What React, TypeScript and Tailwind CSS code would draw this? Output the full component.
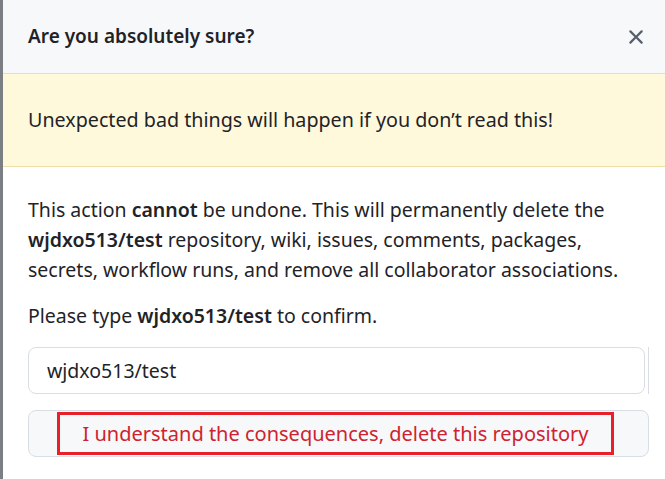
import React from 'react'

export default function App() {
  return (
    <div className="flex h-[479px] w-[665px] overflow-hidden bg-white font-['Noto_Sans',sans-serif] text-[#1f2328]">
      {/* dimmed page behind the dialog */}
      <div className="w-[3px] shrink-0 bg-[#7b7e83]" />

      <div className="flex min-w-0 flex-1 flex-col">
        {/* Header */}
        <div className="flex h-[74px] shrink-0 items-center justify-between border-b border-[#eedfa6] bg-[#f6f8fa] pl-[25px] pr-[17px]">
          <h1 className="text-[19px] font-semibold leading-none">Are you absolutely sure?</h1>
          <button className="text-[#57606a]">
            <svg width="24" height="24" viewBox="0 0 16 16" fill="currentColor">
              <path d="M3.72 3.72a.75.75 0 0 1 1.06 0L8 6.94l3.22-3.22a.749.749 0 0 1 1.275.326.749.749 0 0 1-.215.734L9.06 8l3.22 3.22a.749.749 0 0 1-.326 1.275.749.749 0 0 1-.734-.215L8 9.06l-3.22 3.22a.751.751 0 0 1-1.042-.018.751.751 0 0 1-.018-1.042L6.94 8 3.72 4.78a.75.75 0 0 1 0-1.06Z" />
            </svg>
          </button>
        </div>

        {/* Warning flash */}
        <div className="flex h-[93px] shrink-0 items-center border-b border-[#eedfa6] bg-[#fff9db] pl-[25px] text-[19.7px]">
          Unexpected bad things will happen if you don’t read this!
        </div>

        {/* Body */}
        <div className="flex flex-col pl-[25px] pr-[16px] pt-[28px]">
          <p className="text-[19.5px] leading-[30px]">
            This action <strong className="font-semibold">cannot</strong> be undone. This will permanently delete the{' '}
            <strong className="font-semibold">wjdxo513/test</strong> repository, wiki, issues, comments, packages,
            secrets, workflow runs, and remove all collaborator associations.
          </p>
          <p className="mt-[16px] text-[19.5px] leading-[30px]">
            Please type <strong className="font-semibold">wjdxo513/test</strong> to confirm.
          </p>

          <div className="mt-[16px] flex items-stretch gap-[3px]">
            <div className="flex h-[47px] w-[621px] items-center rounded-[8px] border border-[#d9dee4] bg-white px-[18px] text-[19.5px]">
              wjdxo513/test
            </div>
            <div className="w-px bg-[#d9dee4]" />
          </div>

          <div className="mt-[16px] flex h-[47px] w-[621px] items-center rounded-[8px] border border-[#d9dee4] bg-[#f6f8fa] pl-[28px]">
            <button className="flex h-[43px] w-[557px] items-center justify-center border-[3px] border-[#e8202a] text-[20px] text-[#cf222e]">
              I understand the consequences, delete this repository
            </button>
          </div>
        </div>
      </div>
    </div>
  )
}
